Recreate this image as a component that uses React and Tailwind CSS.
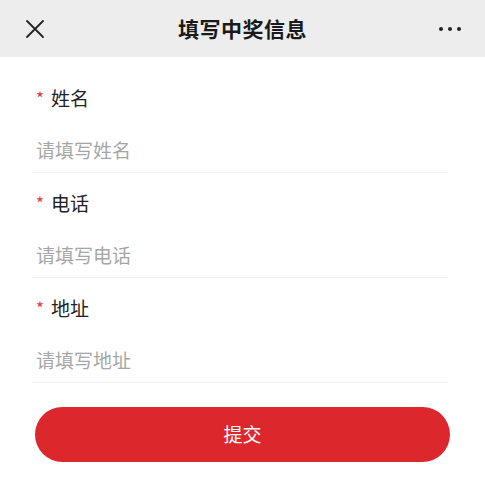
import { useState } from 'react';

const fields = [
  { key: 'name', label: '姓名', placeholder: '请填写姓名' },
  { key: 'phone', label: '电话', placeholder: '请填写电话' },
  { key: 'address', label: '地址', placeholder: '请填写地址' },
];

function App() {
  const [form, setForm] = useState({ name: '', phone: '', address: '' });

  return (
    <div
      className="w-[485px] h-[504px] bg-white overflow-hidden"
      style={{ fontFamily: '"Noto Sans CJK SC", "Noto Sans", sans-serif' }}
    >
      {/* Nav bar */}
      <div className="h-[57px] bg-[#ededed] flex items-center justify-between px-[24px]">
        <button className="w-[22px] h-[22px] flex items-center justify-center">
          <svg width="20" height="20" viewBox="0 0 20 20" fill="none" stroke="#222" strokeWidth="1.8" strokeLinecap="round">
            <path d="M2 2 L18 18 M18 2 L2 18" />
          </svg>
        </button>
        <div className="text-[21px] font-bold text-[#1a1a1a] tracking-[0.5px]">填写中奖信息</div>
        <div className="flex items-center gap-[5px]">
          <span className="w-[4px] h-[4px] rounded-full bg-[#222]" />
          <span className="w-[4px] h-[4px] rounded-full bg-[#222]" />
          <span className="w-[4px] h-[4px] rounded-full bg-[#222]" />
        </div>
      </div>

      {/* Form */}
      <div className="pt-[11px] pl-[32px] pr-[37px]">
        {fields.map((f) => (
          <div key={f.key} className="border-b border-[#f1f1f1] pb-[2px]">
            <div className="pt-[16px] h-[44px] pl-[4px] flex items-center">
              <span className="text-[#e03a3a] text-[17px] mr-[7px] leading-none -mt-[2px]">*</span>
              <span className="text-[19px] text-[#222] leading-[28px]">{f.label}</span>
            </div>
            <input
              value={form[f.key]}
              onChange={(e) => setForm((prev) => ({ ...prev, [f.key]: e.target.value }))}
              placeholder={f.placeholder}
              className="mt-[16px] h-[42px] w-full pl-[4px] text-[19px] text-[#222] placeholder:text-[#a6a6a6] outline-none bg-transparent"
            />
          </div>
        ))}
      </div>

      <div className="pt-[24px] pl-[35px] pr-[35px]">
        <button className="w-full h-[55px] rounded-full bg-[#dc272c] text-white text-[19px]">
          提交
        </button>
      </div>
    </div>
  );
}

export default App;
